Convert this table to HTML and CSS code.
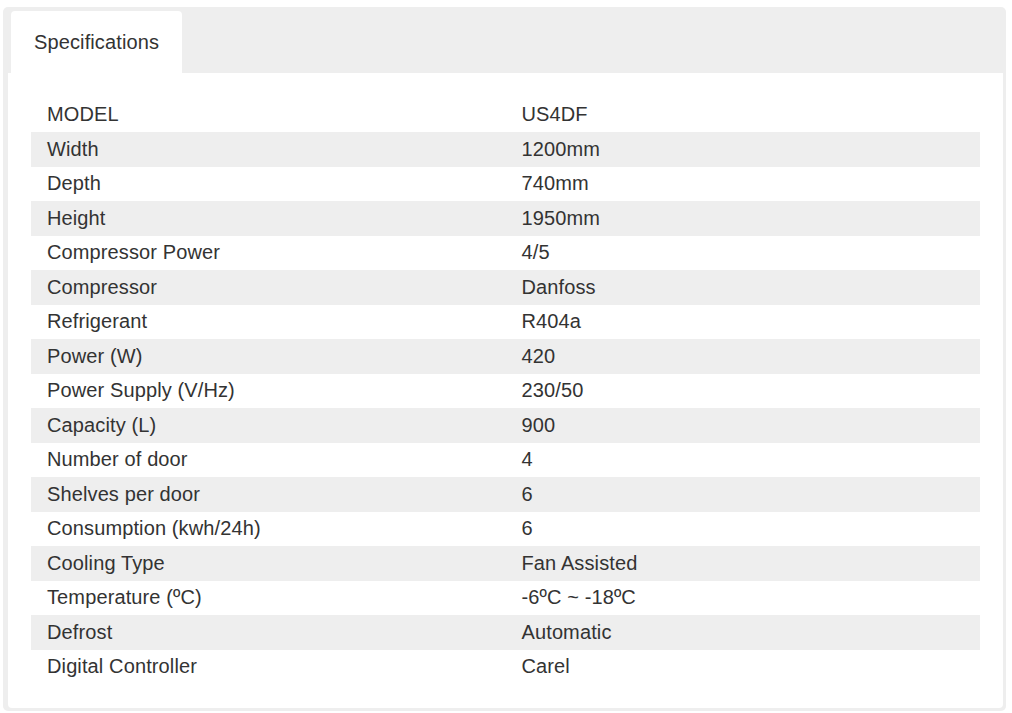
FILE: index.html
```html
<!DOCTYPE html>
<html>
<head>
<meta charset="utf-8">
<link rel="stylesheet" href="styles.css">
</head>
<body>
<div class="box">
  <div class="tabs">
    <div class="tab">Specifications</div>
  </div>
  <div class="content">
    <table class="specs">
      <tbody>
        <tr><td>MODEL</td><td>US4DF</td></tr>
        <tr><td>Width</td><td>1200mm</td></tr>
        <tr><td>Depth</td><td>740mm</td></tr>
        <tr><td>Height</td><td>1950mm</td></tr>
        <tr><td>Compressor Power</td><td>4/5</td></tr>
        <tr><td>Compressor</td><td>Danfoss</td></tr>
        <tr><td>Refrigerant</td><td>R404a</td></tr>
        <tr><td>Power (W)</td><td>420</td></tr>
        <tr><td>Power Supply (V/Hz)</td><td>230/50</td></tr>
        <tr><td>Capacity (L)</td><td>900</td></tr>
        <tr><td>Number of door</td><td>4</td></tr>
        <tr><td>Shelves per door</td><td>6</td></tr>
        <tr><td>Consumption (kwh/24h)</td><td>6</td></tr>
        <tr><td>Cooling Type</td><td>Fan Assisted</td></tr>
        <tr><td>Temperature (ºC)</td><td>-6ºC ~ -18ºC</td></tr>
        <tr><td>Defrost</td><td>Automatic</td></tr>
        <tr><td>Digital Controller</td><td>Carel</td></tr>
      </tbody>
    </table>
  </div>
</div>
</body>
</html>
```

FILE: styles.css
```css
html, body {
  margin: 0;
  padding: 0;
  background: #fff;
}
body {
  font-family: "Liberation Sans", Arial, sans-serif;
  font-size: 20px;
  letter-spacing: 0.12px;
  color: #333;
}
.box {
  margin: 7px 0 0 3px;
  width: 1003px;
  height: 704px;
  box-sizing: border-box;
  background: #eeeeee;
  border-radius: 5px;
  padding: 4px 3px 3px 5px;
}
.tabs {
  display: flex;
  padding-left: 3px;
  height: 62px;
}
.tab {
  background: #fff;
  border-radius: 4px 4px 0 0;
  padding: 20px 23px 0 23px;
  line-height: 23px;
  box-sizing: border-box;
  height: 62px;
}
.content {
  background: #fff;
  border-radius: 0 0 4px 4px;
  padding: 24.5px 23px 24px 23px;
}
.specs {
  width: 100%;
  border-collapse: collapse;
  table-layout: fixed;
}
.specs td {
  width: 50%;
  padding: 5.5px 16px 6px 16px;
  line-height: 23px;
  vertical-align: top;
  white-space: nowrap;
}
.specs tr:nth-child(even) td {
  background: #eeeeee;
}
```
